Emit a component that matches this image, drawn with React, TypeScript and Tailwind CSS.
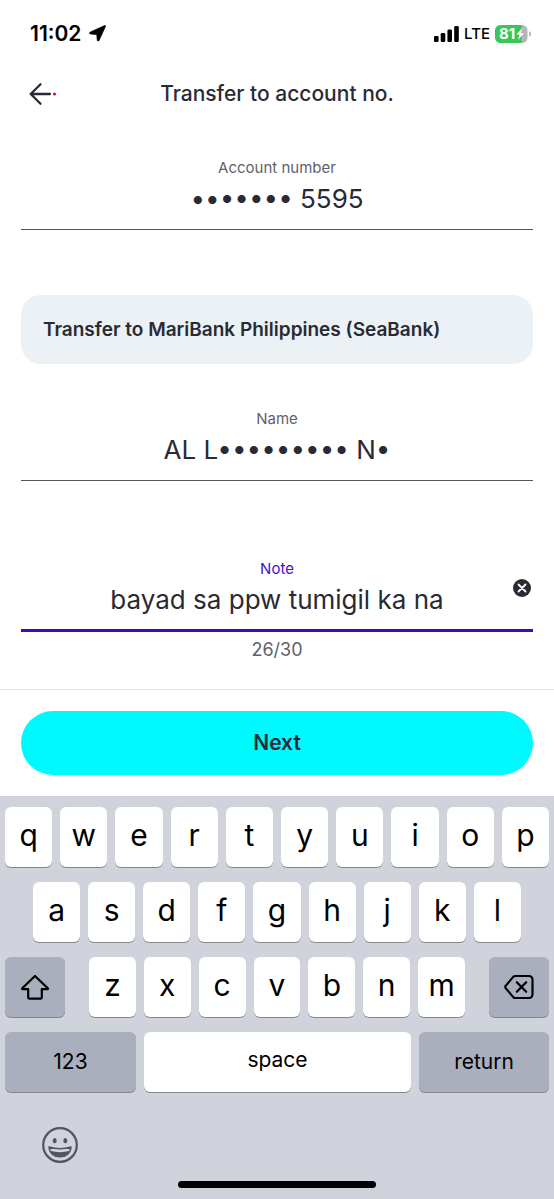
import { useState } from 'react'
import type { ReactNode } from 'react'
import clsx from 'clsx'

const NOTE_LIMIT = 30

const ROWS = ['qwertyuiop', 'asdfghjkl', 'zxcvbnm']

function StatusBar() {
  return (
    <div className="h-[67px] pl-[30px] pr-[23px] flex items-center justify-between text-black">
      <div className="flex items-center gap-2">
        <span className="text-[21px] leading-6 font-semibold">11:02</span>
        <svg className="w-[17px] h-[17px]" viewBox="0 0 17 17" fill="currentColor">
          <path
            d="M15.6.6 1.1 7.2c-.8.4-.6 1.6.2 1.700l6 .5c.3 0 .4.1.5.400l.5 5.500c.1.9 1.300 1.100 1.700.200L16.4 1.500c.3-.7-.2-1.200-.8-.9Z"
            stroke="currentColor"
            strokeWidth=".8"
            strokeLinejoin="round"
          />
        </svg>
      </div>
      <div className="flex items-center gap-[5px]">
        <svg className="w-[25px] h-4" viewBox="0 0 25 16" fill="currentColor">
          <rect x="0" y="10" width="4.6" height="6" rx="1.3" />
          <rect x="6.7" y="7" width="4.6" height="9" rx="1.3" />
          <rect x="13.4" y="3.6" width="4.6" height="12.4" rx="1.3" />
          <rect x="20.2" y="0" width="4.6" height="16" rx="1.3" />
        </svg>
        <span className="text-[15px] leading-6 font-medium">LTE</span>
        <div className="relative h-[18px] w-[36px]">
          <svg className="h-full w-full" viewBox="0 0 36 18">
            <path d="M5.5 0H27v18H5.5A5.5 5.5 0 0 1 0 12.5v-7A5.5 5.5 0 0 1 5.5 0Z" fill="#34c759" />
            <path d="M26.5 0H27a5.5 5.5 0 0 1 5.500 5.500v7A5.500 5.500 0 0 1 27 18h-.5Z" fill="#b5b5b8" />
            <path d="M34 6.300c1.500.4 2 1.500 2 2.700s-.5 2.300-2 2.700Z" fill="#b5b5b8" />
            <path d="M27.300 3 21.400 9.600h3L23 15l6-6.700h-3.100Z" fill="#fff" />
          </svg>
          <span className="absolute inset-y-0 left-1 text-[15px] leading-[18px] font-bold text-white">81</span>
        </div>
      </div>
    </div>
  )
}

type FieldProps = {
  id: string
  label: string
  value: string
  active?: boolean
  onChange?: (value: string) => void
  children?: ReactNode
}

function Field({ id, label, value, active, onChange, children }: FieldProps) {
  return (
    <div
      className={clsx(
        'relative flex flex-col text-center',
        active ? 'pb-2 border-b-3 border-[#4008b8]' : 'pb-[9px] border-b border-[#55555f]'
      )}
    >
      <label
        htmlFor={id}
        className={clsx('text-[15px] leading-5', active ? 'text-[#4a0fc4]' : 'text-[#5f5f6b]')}
      >
        {label}
      </label>
      <input
        id={id}
        type="text"
        value={value}
        readOnly={!onChange}
        maxLength={NOTE_LIMIT}
        onChange={(e) => onChange?.(e.target.value)}
        className="h-10 mb-0.5 w-full bg-transparent text-center text-[26px] text-[#2a2a35] outline-none"
      />
      {children}
    </div>
  )
}

type KeyProps = {
  children: ReactNode
  label?: string
  dark?: boolean
  className?: string
  onClick?: () => void
}

function Key({ children, label, dark, className, onClick }: KeyProps) {
  return (
    <button
      type="button"
      aria-label={label}
      onClick={onClick}
      className={clsx(
        'h-[60px] flex items-center justify-center rounded-md text-black shadow-[0_1px_0_#85878c]',
        dark ? 'bg-[#a9afbc]' : 'bg-white',
        className
      )}
    >
      {children}
    </button>
  )
}

function Keyboard({ onKey, onDelete }: { onKey: (key: string) => void; onDelete: () => void }) {
  const letters = (row: string) =>
    row.split('').map((char) => (
      <Key key={char} className="flex-1 pb-1 text-[30px]" onClick={() => onKey(char)}>
        {char}
      </Key>
    ))

  return (
    <div className="bg-[#d0d3dc] pt-[11px] px-[5px] pb-[11px]">
      <div className="flex flex-col gap-[15px]">
        <div className="flex gap-2">{letters(ROWS[0])}</div>
        <div className="flex gap-2 px-7">{letters(ROWS[1])}</div>
        <div className="flex gap-6">
          <Key dark label="Shift" className="w-[60px]">
            <svg className="w-[30px] h-[30px]" viewBox="0 0 30 30" fill="none" stroke="currentColor" strokeWidth="2.2" strokeLinejoin="round">
              <path d="M15 4 2.200 16.300c-.4.4-.2.900.4.900h5.600v8.200c0 .8.500 1.300 1.300 1.300h11c.8 0 1.300-.5 1.300-1.300v-8.200h5.600c.6 0 .8-.5.400-.9Z" />
            </svg>
          </Key>
          <div className="flex flex-1 gap-2">{letters(ROWS[2])}</div>
          <Key dark label="Delete" className="w-[60px]" onClick={onDelete}>
            <svg className="w-[30px] h-[26px]" viewBox="0 0 30 26" fill="none" stroke="currentColor" strokeWidth="2.200" strokeLinecap="round" strokeLinejoin="round">
              <path d="M11.500 2H25a3.500 3.500 0 0 1 3.500 3.500v15A3.500 3.500 0 0 1 25 24H11.500c-1 0-1.700-.3-2.300-.9l-7.300-8.700c-.8-.9-.8-1.900 0-2.800l7.300-8.700c.6-.6 1.300-.9 2.300-.9Z" />
              <path d="m12.800 8.200 9.400 9.600M22.200 8.200l-9.400 9.600" />
            </svg>
          </Key>
        </div>
        <div className="flex gap-2">
          <Key dark className="w-[131px] text-[21px]">123</Key>
          <Key className="flex-1 pb-1 text-[21px]" onClick={() => onKey(' ')}>space</Key>
          <Key dark className="w-[130px] text-[21px]">return</Key>
        </div>
      </div>
      <button type="button" aria-label="Emoji" className="mt-[35px] ml-[37px] block text-[#51555f]">
        <svg className="w-9 h-9" viewBox="0 0 36 36" fill="none" stroke="currentColor" strokeWidth="2.200">
          <circle cx="18" cy="18" r="16.800" />
          <ellipse cx="12.700" cy="13.700" rx="2" ry="2.600" fill="currentColor" stroke="none" />
          <ellipse cx="23.300" cy="13.700" rx="2" ry="2.600" fill="currentColor" stroke="none" />
          <path d="M7 20c7 2.100 15 2.100 22 0-.4 5.800-4.800 9.800-11 9.800S7.400 25.800 7 20Z" strokeWidth="1.500" strokeLinejoin="round" />
          <path d="M8 23.800c6.500 1.900 13.500 1.900 20 0-1.500 3.700-5.200 6-10 6s-8.500-2.300-10-6Z" fill="currentColor" stroke="none" />
        </svg>
      </button>
      <div className="mt-[18px] mx-auto w-[198px] h-[7px] rounded-full bg-black" />
    </div>
  )
}

export default function App() {
  const [note, setNote] = useState('bayad sa ppw tumigil ka na')

  const append = (char: string) => setNote((prev) => (prev + char).slice(0, NOTE_LIMIT))
  const removeLast = () => setNote((prev) => prev.slice(0, -1))

  return (
    <div className="min-h-screen flex flex-col bg-white font-[Inter,sans-serif] text-[#2a2a35]">
      <StatusBar />

      {/* Header */}
      <header className="px-[29px] h-[54px] grid grid-cols-[1fr_auto_1fr] items-center">
        <button type="button" aria-label="Back" className="justify-self-start">
          <svg className="w-7 h-6" viewBox="0 0 28 24" fill="none" stroke="currentColor" strokeWidth="2.300" strokeLinecap="round" strokeLinejoin="round">
            <path d="M11.500 2.200 1.700 12l9.800 9.800M1.700 12H21" />
            <circle cx="25.500" cy="12" r="1.600" fill="#e6004c" stroke="none" />
          </svg>
        </button>
        <h1 className="text-[21px] leading-6 font-medium">Transfer to account no.</h1>
      </header>

      {/* Form */}
      <main className="px-[21px] pt-[37px] pb-[27px]">
        <Field id="account" label="Account number" value="••••••• 5595" />

        <div className="mt-[65px] mb-[45px] h-[69px] px-[22px] flex items-center rounded-[20px] bg-[#ebf1f4]">
          <p className="text-[19px] leading-6 font-semibold">Transfer to MariBank Philippines (SeaBank)</p>
        </div>

        <Field id="name" label="Name" value="AL L••••••••• N•" />

        <div className="mt-[78px]">
          <Field id="note" label="Note" value={note} active onChange={setNote}>
            <button
              type="button"
              aria-label="Clear note"
              onClick={() => setNote('')}
              className="absolute right-0.5 top-5"
            >
              <svg className="w-[18px] h-[18px]" viewBox="0 0 18 18">
                <circle cx="9" cy="9" r="9" fill="#2a2a35" />
                <path d="m5.500 5.500 7 7M12.500 5.500l-7 7" stroke="#fff" strokeWidth="1.800" strokeLinecap="round" />
              </svg>
            </button>
          </Field>
          <p className="mt-2 text-center text-[18px] leading-5 text-[#5f5f6b]">
            {note.length}/{NOTE_LIMIT}
          </p>
        </div>
      </main>

      <footer className="mt-auto px-[21px] py-[21px] border-t border-[#e6e6e9]">
        <button type="button" className="w-full h-16 rounded-full bg-[#00f8ff] text-[21px] font-semibold">
          Next
        </button>
      </footer>

      <Keyboard onKey={append} onDelete={removeLast} />
    </div>
  )
}
